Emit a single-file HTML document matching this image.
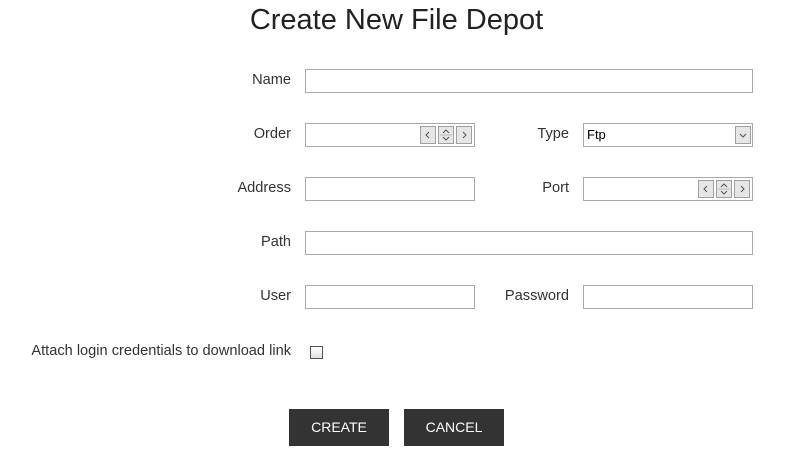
<!DOCTYPE html>
<html><head><style>
body{margin:0;width:785px;height:457px;background:#fff;font-family:"Liberation Sans",sans-serif;color:#222;position:relative;overflow:hidden}
.a{position:absolute}
h1{position:absolute;left:0;width:793px;text-align:center;top:4px;margin:0;font-weight:normal;font-size:29px;color:#222}
.l{position:absolute;font-size:14.6px;text-align:right;color:#333;line-height:18px}
.i{position:absolute;box-sizing:border-box;border:1px solid #a9a9a9;background:#fff;height:24px}
.sb{position:absolute;top:2px;width:16px;height:18px;box-sizing:border-box;border:1px solid #a0a0a0;background:#e6e6e6}
.sb svg{position:absolute;left:0;top:0}
.btn{position:absolute;top:409px;height:37px;background:#333;color:#fff;font-size:14px;text-align:center;line-height:37px}
</style></head><body>
<h1>Create New File Depot</h1>
<div class="l" style="right:494px;top:71px">Name</div>
<div class="i" style="left:305px;top:69px;width:448px"></div>
<div class="l" style="right:494px;top:125px">Order</div>
<div class="i" style="left:305px;top:123px;width:170px">
<div class="sb" style="left:114px"><svg width="14" height="16"><path d="M8 5L5 8L8 11" fill="none" stroke="#555"/></svg></div>
<div class="sb" style="left:132px"><svg width="14" height="16"><path d="M4 6L7 3L10 6M4 10L7 13L10 10" fill="none" stroke="#555"/><path d="M1 8H13" stroke="#bbb"/></svg></div>
<div class="sb" style="left:150px"><svg width="14" height="16"><path d="M6 5L9 8L6 11" fill="none" stroke="#555"/></svg></div></div>
<div class="l" style="right:216px;top:125px">Type</div>
<div class="i" style="left:583px;top:123px;width:170px;font-size:13px;padding:3px 0 0 3px;color:#000">Ftp<div class="sb" style="left:151px;top:2px;width:16px"><svg width="14" height="16"><path d="M4 7L7 10L10 7" fill="none" stroke="#555"/></svg></div></div>
<div class="l" style="right:494px;top:179px">Address</div>
<div class="i" style="left:305px;top:177px;width:170px"></div>
<div class="l" style="right:216px;top:179px">Port</div>
<div class="i" style="left:583px;top:177px;width:170px">
<div class="sb" style="left:114px"><svg width="14" height="16"><path d="M8 5L5 8L8 11" fill="none" stroke="#555"/></svg></div>
<div class="sb" style="left:132px"><svg width="14" height="16"><path d="M4 6L7 3L10 6M4 10L7 13L10 10" fill="none" stroke="#555"/><path d="M1 8H13" stroke="#bbb"/></svg></div>
<div class="sb" style="left:150px"><svg width="14" height="16"><path d="M6 5L9 8L6 11" fill="none" stroke="#555"/></svg></div></div>
<div class="l" style="right:494px;top:233px">Path</div>
<div class="i" style="left:305px;top:231px;width:448px"></div>
<div class="l" style="right:494px;top:287px">User</div>
<div class="i" style="left:305px;top:285px;width:170px"></div>
<div class="l" style="right:216px;top:287px">Password</div>
<div class="i" style="left:583px;top:285px;width:170px"></div>
<div class="l" style="right:494px;top:342px">Attach login credentials to download link</div>
<div class="a" style="left:310px;top:346px;width:13px;height:13px;box-sizing:border-box;border:1px solid #555;background:linear-gradient(#fff,#e0e0e0)"></div>
<div class="btn" style="left:289px;width:100px">CREATE</div>
<div class="btn" style="left:404px;width:100px">CANCEL</div>
</body></html>
